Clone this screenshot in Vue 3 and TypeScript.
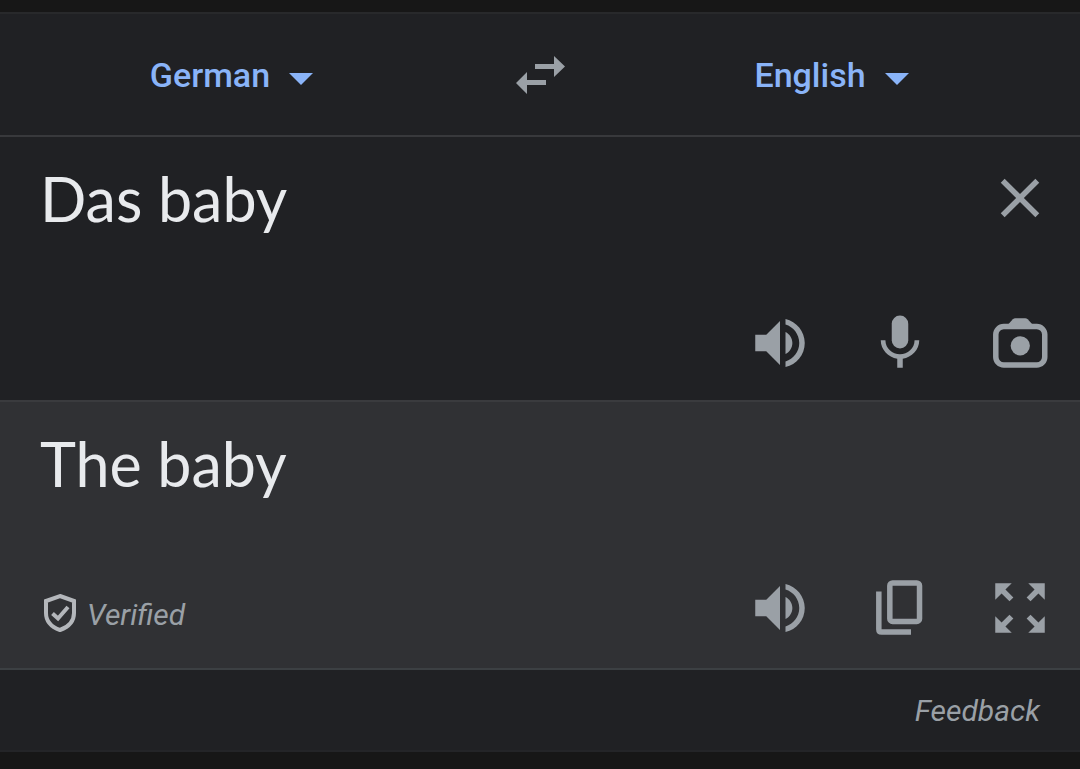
<script setup lang="ts">
import { ref } from 'vue'

const languages = ['German', 'English', 'French', 'Spanish']
const from = ref('German')
const to = ref('English')
const source = ref('Das baby')
const translation = ref('The baby')

const speaker =
  'M3 9v6h4l5 5V4L7 9H3zm13.5 3c0-1.77-1.02-3.29-2.5-4.03v8.05c1.48-.73 2.5-2.25 2.5-4.02zM14 3.23v2.06c2.89.86 5 3.54 5 6.71s-2.11 5.85-5 6.71v2.06c4.01-.91 7-4.49 7-8.77s-2.99-7.86-7-8.77z'

function swap() {
  const language = from.value
  from.value = to.value
  to.value = language
  const text = source.value
  source.value = translation.value
  translation.value = text
}
</script>

<template>
  <main class="translator">
    <header class="languages">
      <div class="picker">
        <select v-model="from" aria-label="Source language">
          <option v-for="l in languages" :key="l">{{ l }}</option>
        </select>
        <svg class="caret" viewBox="0 0 24 12" aria-hidden="true"><path d="M0 0h24L12 12z" /></svg>
      </div>
      <button class="swap" type="button" aria-label="Swap languages" @click="swap">
        <svg viewBox="0 0 50 38" aria-hidden="true">
          <path d="M20 8h19V0l11 10.500L39 21v-8H20zM31 24H12v-8L1 27l11 11v-9h19z" />
        </svg>
      </button>
      <div class="picker">
        <select v-model="to" aria-label="Target language">
          <option v-for="l in languages" :key="l">{{ l }}</option>
        </select>
        <svg class="caret" viewBox="0 0 24 12" aria-hidden="true"><path d="M0 0h24L12 12z" /></svg>
      </div>
    </header>

    <section class="panel source">
      <div class="row">
        <input v-model="source" class="phrase" type="text" aria-label="Text to translate" spellcheck="false" />
        <button class="tool" type="button" aria-label="Clear text" @click="source = ''">
          <svg viewBox="0 0 24 24" aria-hidden="true">
            <path d="M19 6.41L17.59 5 12 10.59 6.41 5 5 6.41 10.59 12 5 17.59 6.41 19 12 13.41 17.59 19 19 17.59 13.41 12z" />
          </svg>
        </button>
      </div>
      <div class="row tools">
        <button class="tool" type="button" aria-label="Listen to source">
          <svg viewBox="0 0 24 24" aria-hidden="true"><path :d="speaker" /></svg>
        </button>
        <button class="tool" type="button" aria-label="Speak">
          <svg viewBox="0 0 24 24" aria-hidden="true">
            <rect x="9" y="2" width="6" height="12" rx="3" />
            <path d="M17.3 11c0 3-2.54 5.1-5.3 5.1S6.7 14 6.7 11H5c0 3.41 2.72 6.23 6 6.72V21h2v-3.28c3.28-.48 6-3.3 6-6.72h-1.7z" />
          </svg>
        </button>
        <button class="tool" type="button" aria-label="Translate with camera">
          <svg viewBox="0 0 24 24" aria-hidden="true">
            <rect class="line" x="3.2" y="6" width="17.8" height="14" rx="2.9" />
            <path d="M7.400 5.500L9.400 3.400Q9.800 3 10.300 3h3.600q.5 0 .9.4l2 2.100z" />
            <circle cx="12.1" cy="13" r="3.5" />
          </svg>
        </button>
      </div>
    </section>

    <section class="panel target">
      <div class="row">
        <output class="phrase">{{ translation }}</output>
      </div>
      <div class="row tools">
        <span class="verified">
          <svg viewBox="0 0 34 40" aria-hidden="true">
            <path d="M17 3L31 8v12c0 8-5.500 14-14 17C8.500 34 3 28 3 20V8z" />
            <path d="M9.500 20.500l5.500 5L25 14" />
          </svg>
          Verified
        </span>
        <button class="tool" type="button" aria-label="Listen to translation">
          <svg viewBox="0 0 24 24" aria-hidden="true"><path :d="speaker" /></svg>
        </button>
        <button class="tool" type="button" aria-label="Copy translation">
          <svg viewBox="0 0 24 24" aria-hidden="true">
            <rect class="line" x="8.300" y="2.900" width="10.800" height="14" rx="1" />
            <path class="line" d="M4.300 6v13.700q0 1 1 1H16" />
          </svg>
        </button>
        <button class="tool" type="button" aria-label="Full screen">
          <svg viewBox="0 0 24 24" aria-hidden="true">
            <path d="M15 3l2.3 2.3-2.89 2.87 1.42 1.42L18.7 6.7 21 9V3zM3 9l2.3-2.3 2.87 2.89 1.42-1.42L6.7 5.3 9 3H3zm6 12l-2.3-2.3 2.89-2.87-1.42-1.42L5.3 17.3 3 15v6zm12-6l-2.3 2.3-2.87-2.89-1.42 1.42 2.89 2.87L15 21h6z" />
          </svg>
        </button>
      </div>
    </section>

    <footer class="foot"><a href="#feedback">Feedback</a></footer>
  </main>
</template>

<style>
body {
  margin: 0;
  background: #171717;
}
</style>

<style scoped>
.translator {
  margin: 12px 0 16px;
  border-top: 2px solid #28292b;
  border-bottom: 2px solid #242528;
  background: #202124;
  color: #e8eaed;
  font-family: Roboto, "Liberation Sans", sans-serif;
}

button,
select,
input {
  margin: 0;
  padding: 0;
  border: 0;
  background: none;
  color: inherit;
  font: inherit;
}

button,
select {
  cursor: pointer;
}

svg {
  display: block;
  fill: #9aa0a6;
}

.languages {
  display: grid;
  grid-template-columns: 1fr 120px 1fr;
  align-items: center;
  height: 121px;
  border-bottom: 2px solid #38393c;
}

.picker {
  display: flex;
  align-items: center;
  justify-content: center;
  gap: 19px;
  padding-right: 17px;
  color: #8ab4f8;
  font-size: 34px;
  font-weight: 500;
  line-height: 48px;
}

.picker select {
  appearance: none;
  field-sizing: content;
}

.caret {
  width: 24px;
  height: 12px;
  margin-top: 8px;
  fill: #8ab4f8;
}

.swap {
  display: grid;
  place-items: center;
  height: 66px;
}

.swap svg {
  width: 50px;
  height: 38px;
}

.panel {
  display: flex;
  flex-direction: column;
  justify-content: space-between;
  box-sizing: border-box;
  min-height: 265px;
  padding: 28px 0 24px;
  border-bottom: 2px solid #3c4043;
}

.source {
  border-bottom-color: #3a3b3e;
}

.target {
  min-height: 268px;
  padding-bottom: 27px;
  background: #303134;
}

.row {
  display: flex;
  align-items: flex-start;
}

.phrase {
  flex: 1;
  min-width: 0;
  height: 68px;
  padding-left: 40px;
  font-family: Lato, "Open Sans", sans-serif;
  font-size: 61px;
  line-height: 68px;
}

.tools {
  justify-content: flex-end;
}

.tool {
  display: grid;
  flex: none;
  place-items: center;
  width: 120px;
  height: 66px;
}

.tool svg {
  width: 66px;
  height: 66px;
}

.line {
  fill: none;
  stroke: #9aa0a6;
  stroke-width: 2;
}

.verified {
  display: flex;
  flex: 1;
  align-items: center;
  gap: 10px;
  padding: 20px 0 0 43px;
  color: #9aa0a6;
  font-size: 30px;
  font-style: italic;
  line-height: 40px;
}

.verified svg {
  width: 34px;
  height: 40px;
  margin-top: -4px;
  fill: none;
  stroke: #b4b7bb;
  stroke-width: 4;
}

.foot {
  display: flex;
  align-items: center;
  justify-content: flex-end;
  height: 80px;
  padding-right: 40px;
  font-size: 30px;
  font-style: italic;
}

.foot a {
  color: #9aa0a6;
  text-decoration: none;
}
</style>
